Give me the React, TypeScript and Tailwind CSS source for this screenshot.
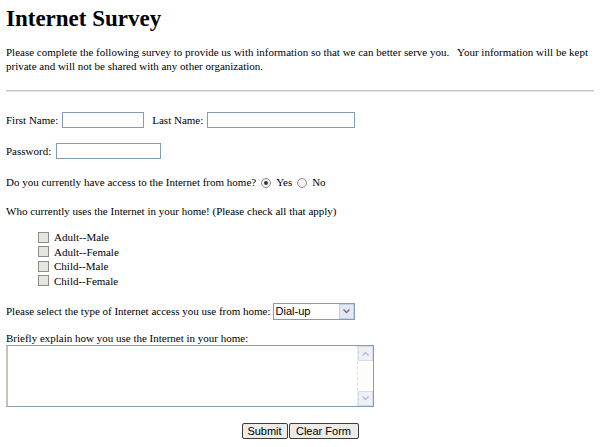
import React from "react";

const serif = { fontFamily: '"Liberation Serif", "Times New Roman", serif' };
const sans = { fontFamily: '"Liberation Sans", Arial, sans-serif' };

const TextBox = ({ w }: { w: string }) => (
  <span className={`inline-block ${w} h-[16px] border border-[#7f9db9] bg-white align-middle`} />
);

const Radio = ({ checked }: { checked?: boolean }) => (
  <span className="inline-flex w-[10px] h-[10px] rounded-full border border-[#8c8c8c] bg-[#f4f4f0] items-center justify-center align-middle">
    {checked && <span className="w-[4px] h-[4px] rounded-full bg-[#3a3a3a]" />}
  </span>
);

const Check = () => (
  <span className="inline-block w-[11px] h-[11px] border border-[#8c8c8c] bg-[#e6e6e0] align-middle" />
);

const App = () => {
  return (
    <div className="w-[600px] h-[447px] bg-white text-black overflow-hidden px-[6px]" style={serif}>
      <h1 className="text-[23px] font-bold leading-[28px] pt-[5px]">Internet Survey</h1>
      <p className="text-[11px] leading-[14px] mt-[12px]">
        Please complete the following survey to provide us with information so that we can better serve you.{"\u00a0\u00a0 "}Your information will be kept private and will not be shared with any other organization.
      </p>
      <div className="h-[2px] bg-[#c4c4bc] mt-[17px] border-b border-[#e8e8e4]" />

      <div className="text-[11px] leading-[14px]">
        <div className="flex items-center h-[16px] mt-[20px]">
          <span>First Name:</span>
          <span className="ml-[4px]"><TextBox w="w-[82px]" /></span>
          <span className="ml-[8px]">Last Name:</span>
          <span className="ml-[4px]"><TextBox w="w-[148px]" /></span>
        </div>

        <div className="flex items-center h-[16px] mt-[15px]">
          <span>Password:</span>
          <span className="ml-[5px]"><TextBox w="w-[105px]" /></span>
        </div>

        <div className="flex items-center h-[16px] mt-[15px]">
          <span>Do you currently have access to the Internet from home?</span>
          <span className="ml-[5px]"><Radio checked /></span>
          <span className="ml-[5px]">Yes</span>
          <span className="ml-[5px]"><Radio /></span>
          <span className="ml-[5px]">No</span>
        </div>

        <div className="flex items-center h-[16px] mt-[13px]">
          Who currently uses the Internet in your home! (Please check all that apply)
        </div>

        <div className="mt-[11px] pl-[32px] flex flex-col">
          {["Adult--Male", "Adult--Female", "Child--Male", "Child--Female"].map((t) => (
            <div key={t} className="flex items-center h-[14.5px] gap-[5px]">
              <Check />
              <span>{t}</span>
            </div>
          ))}
        </div>

        <div className="flex items-center h-[16px] mt-[15px]">
          <span>Please select the type of Internet access you use from home:</span>
          <span className="ml-[2px] flex items-center w-[82px] h-[17px] border border-[#7f9db9] bg-white">
            <span className="flex-1 pl-[2px] text-[11px] leading-[15px]" style={sans}>Dial-up</span>
            <span className="w-[15px] h-[15px] bg-[#e4e8f2] border border-[#c8d0e0] flex items-center justify-center">
              <svg width="7" height="5" viewBox="0 0 7 5">
                <path d="M0.5 0.5 L3.5 3.5 L6.5 0.5" stroke="#6a7890" strokeWidth="1.5" fill="none" />
              </svg>
            </span>
          </span>
        </div>

        <div className="flex items-center h-[14px] mt-[12px]">Briefly explain how you use the Internet in your home:</div>

        <div className="flex w-[368px] h-[62px] border border-[#7f9db9] border-l-[#c4c4bc] border-l-2 bg-white">
          <div className="flex-1" />
          <div className="w-[16px] flex flex-col justify-between bg-[#fdfdfb] border-l border-dashed border-[#e0e0e0]">
            <span className="h-[15px] bg-[#eef0f8] border border-[#d8dce8] flex items-center justify-center">
              <svg width="7" height="5" viewBox="0 0 7 5">
                <path d="M0.5 4.5 L3.5 1.5 L6.5 4.5" stroke="#b8bcc8" strokeWidth="1.3" fill="none" />
              </svg>
            </span>
            <span className="h-[15px] bg-[#eef0f8] border border-[#d8dce8] flex items-center justify-center">
              <svg width="7" height="5" viewBox="0 0 7 5">
                <path d="M0.5 0.5 L3.5 3.5 L6.5 0.5" stroke="#b8bcc8" strokeWidth="1.3" fill="none" />
              </svg>
            </span>
          </div>
        </div>

        <div className="flex justify-center mt-[16px] gap-[1px]" style={sans}>
          <button className="w-[46px] h-[16px] text-[11px] leading-[14px] border border-[#3c3c3c] rounded-[2px] bg-[#ecebe6]">Submit</button>
          <button className="w-[70px] h-[16px] text-[11px] leading-[14px] border border-[#3c3c3c] rounded-[2px] bg-[#ecebe6]">Clear Form</button>
        </div>
      </div>
    </div>
  );
};

export default App;
